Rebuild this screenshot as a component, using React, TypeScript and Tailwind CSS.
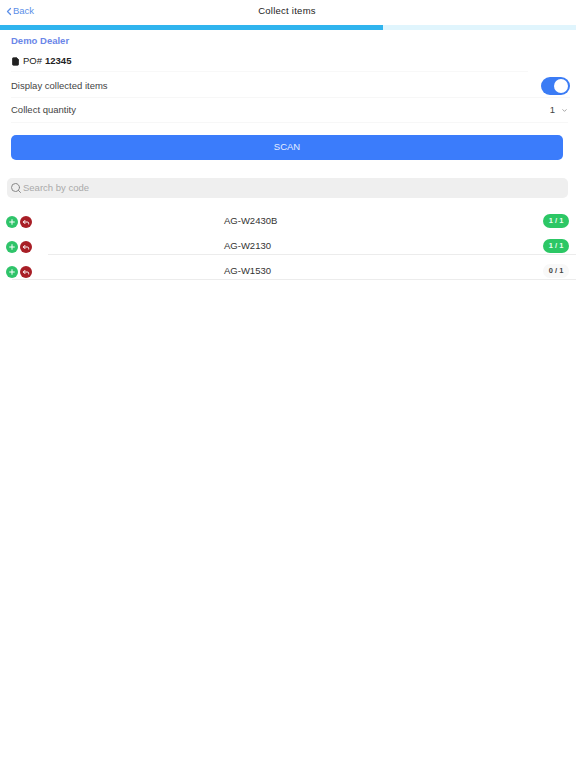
import { ChevronLeft, ChevronDown, Search, FileText, Plus, Reply } from 'lucide-react'

const ITEMS = [
  { code: 'AG-W2430B', count: '1 / 1', done: true, line: false, inset: true },
  { code: 'AG-W2130', count: '1 / 1', done: true, line: true, inset: true },
  { code: 'AG-W1530', count: '0 / 1', done: false, line: true, inset: false },
]

export default function App() {
  return (
    <div className="w-[576px] h-[768px] bg-white overflow-hidden text-[#333] font-['Liberation_Sans',Arial,sans-serif]">
      {/* Header */}
      <div className="relative h-[25px] flex items-center justify-center pb-[2px]">
        <div className="absolute left-[3px] top-[3px] flex items-center text-[9.5px] text-[#5b8fe8]">
          <ChevronLeft className="w-[12px] h-[17px] -mr-[2px]" strokeWidth={2.5} />
          <span>Back</span>
        </div>
        <span className="text-[9.5px] font-medium tracking-[0.25px] text-[#222] -ml-[2px]">Collect items</span>
      </div>
      <div className="h-[5px] bg-[#e0f5fd] flex items-stretch">
        <div className="w-[383px] bg-[#2fb4ee]" />
      </div>

      {/* Order */}
      <div className="px-[11px] h-[22px] text-[9.5px] font-bold text-[#6a86e8] flex items-center">Demo Dealer</div>
      <div className="mx-[11px] h-[20px] flex items-center gap-[3px] text-[9.5px] text-[#222] border-b border-[#f8f8f8] mr-[48px]">
        <FileText className="w-[9px] h-[9px] fill-[#222]" />
        <span>PO#</span>
        <span className="font-bold">12345</span>
      </div>

      {/* Settings */}
      <div className="mx-[11px] mr-[6px] h-[26px] pt-[3px] flex items-center justify-between text-[9.5px] text-[#444] border-b border-[#f7f7f7]">
        <span>Display collected items</span>
        <div className="w-[29px] h-[18px] rounded-full bg-[#3b7cf5] flex items-center justify-end pr-[2px]">
          <div className="w-[14px] h-[14px] rounded-full bg-white" />
        </div>
      </div>
      <div className="mx-[11px] mr-[8px] h-[25px] pt-[1px] flex items-center justify-between text-[9.5px] text-[#444] border-b border-[#f7f7f7]">
        <span>Collect quantity</span>
        <div className="flex items-center gap-[6px]">
          <span>1</span>
          <ChevronDown className="w-[7px] h-[7px] text-[#999]" strokeWidth={3} />
        </div>
      </div>

      {/* Scan */}
      <div className="pl-[11px] pr-[13px] pt-[12px]">
        <button className="w-full h-[25px] rounded-[5px] bg-[#3b7cfb] text-[#e4edff] text-[9.5px] font-medium flex items-center justify-center">SCAN</button>
      </div>

      {/* Search */}
      <div className="pl-[7px] pr-[8px] pt-[18px]">
        <div className="h-[20px] rounded-[5px] bg-[#efefef] flex items-center gap-[1px] px-[3px]">
          <Search className="w-[12px] h-[12px] text-[#888]" />
          <span className="text-[9.5px] text-[#aaa]">Search by code</span>
        </div>
      </div>

      {/* Items */}
      <div className="pt-[11px]">
        {ITEMS.map(item => (
          <div key={item.code} className="relative h-[25px] flex items-center pl-[6px] pr-[7px]">
            {item.line && (
              <div className={`absolute right-0 bottom-[4px] h-px bg-[#ececec] ${item.inset ? 'left-[48px]' : 'left-[12px]'}`} />
            )}
            <div className="flex items-center gap-[2px] w-[200px]">
              <span className="w-[12px] h-[12px] rounded-full bg-[#2fc46a] flex items-center justify-center">
                <Plus className="w-[8px] h-[8px] text-white" strokeWidth={3} />
              </span>
              <span className="w-[12px] h-[12px] rounded-full bg-[#a81e26] flex items-center justify-center">
                <Reply className="w-[8px] h-[8px] text-white" strokeWidth={3} />
              </span>
            </div>
            <span className="absolute left-[224px] text-[9.5px] text-[#333]">{item.code}</span>
            <span className={`ml-auto w-[26px] h-[14px] -mt-[2px] rounded-full text-[7.5px] font-bold flex items-center justify-center ${item.done ? 'bg-[#2cc765] text-[#e8fff0]' : 'bg-[#f8f8f8] text-[#444]'}`}>
              {item.count}
            </span>
          </div>
        ))}
      </div>
    </div>
  )
}
